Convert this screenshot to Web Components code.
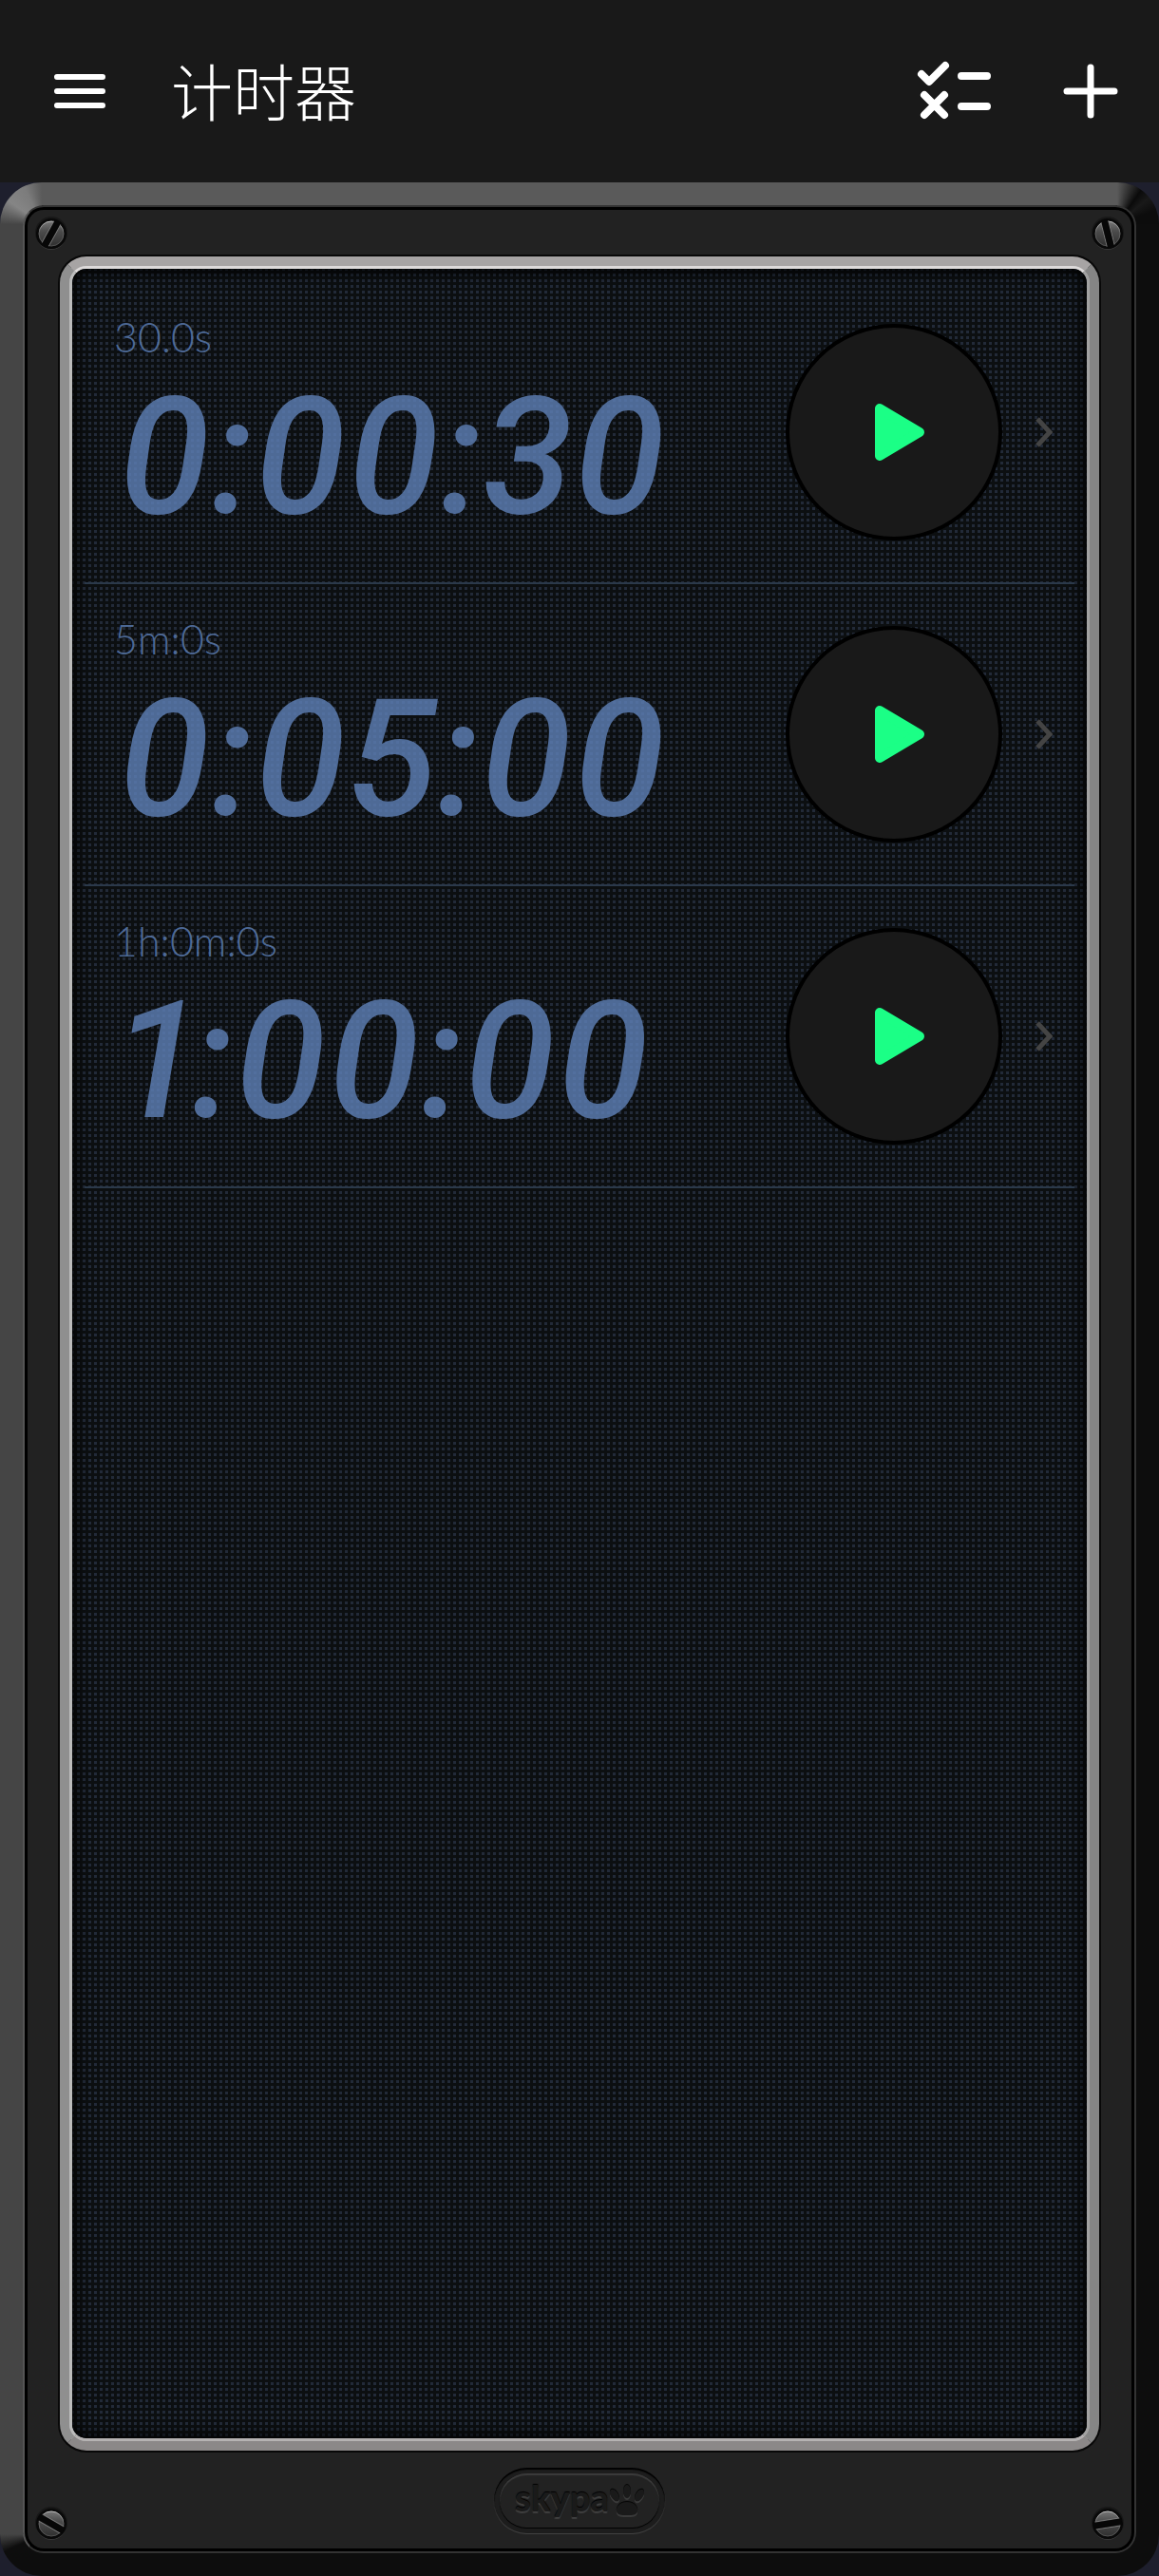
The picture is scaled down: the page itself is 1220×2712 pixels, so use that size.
<!DOCTYPE html>
<html lang="zh-CN">
<head>
<meta charset="utf-8">
<meta name="viewport" content="width=device-width, initial-scale=1">
<title>计时器</title>
<style>
  html, body {
    margin: 0;
    padding: 0;
  }

  body {
    display: flex;
    flex-direction: column;
    min-height: 100vh;
    background: #1e1f2d;
    font-family: Lato, "Noto Sans CJK SC", sans-serif;
  }
</style>
</head>
<body>
  <app-header>
    计时器
  </app-header>

  <device-frame>
    <timer-row name="30.0s" time="0:00:30"></timer-row>
    <timer-row name="5m:0s" time="0:05:00"></timer-row>
    <timer-row name="1h:0m:0s" time="1:00:00"></timer-row>
  </device-frame>

<script>
class AppHeader extends HTMLElement {
  constructor() {
    super();
    this.attachShadow({mode: 'open'});

    this.shadowRoot.innerHTML = `
      <style>
        :host {
          display: block;
          background: #191919;
        }

        header {
          display: flex;
          align-items: center;
          height: 192px;
          padding: 0 36px 0 48px;
        }

        h1 {
          flex: 1;
          margin: 0 0 4px 60px;
          color: #fff;
          font-family: "Noto Sans CJK SC", sans-serif;
          font-size: 65px;
          font-weight: 300;
          line-height: 80px;
        }

        button {
          display: flex;
          padding: 0;
          border: 0;
          background: none;
          color: #fff;
          cursor: pointer;
        }

        .edit {
          margin-right: 66px;
        }

        svg {
          display: block;
          fill: none;
          stroke: currentColor;
          stroke-linecap: round;
          stroke-linejoin: round;
        }
      </style>

      <header>
        <button aria-label="菜单">
          <svg width="72" height="60" viewBox="0 0 72 60" stroke-width="6">
            <path d="M12 15H60M12 30H60M12 45H60" />
          </svg>
        </button>
        <h1><slot></slot></h1>
        <button class="edit" aria-label="编辑">
          <svg width="84" height="66" viewBox="0 0 84 66" stroke-width="8">
            <path d="M8 15L16 23L33 6M11 37L32 58M32 37L11 58M50 17H77M50 49H77" />
          </svg>
        </button>
        <button aria-label="添加">
          <svg width="72" height="72" viewBox="0 0 72 72" stroke-width="7">
            <path d="M36 11V61M11 36H61" />
          </svg>
        </button>
      </header>
    `;
  }
}

class FrameScrew extends HTMLElement {
  constructor() {
    super();
    this.attachShadow({mode: 'open'});
    const angle = this.getAttribute('angle') || 0;

    this.shadowRoot.innerHTML = `
      <style>
        :host {
          display: block;
          width: 36px;
          height: 36px;
        }

        svg {
          display: block;
        }
      </style>

      <svg width="36" height="36" viewBox="0 0 36 36">
        <defs>
          <linearGradient id="metal" x1="0" y1="0" x2="0" y2="1">
            <stop offset="0" stop-color="#777" />
            <stop offset="0.4" stop-color="#4c4c4c" />
            <stop offset="1" stop-color="#303030" />
          </linearGradient>
          <linearGradient id="edge" x1="0" y1="0" x2="0" y2="1">
            <stop offset="0" stop-color="#c4c4c4" />
            <stop offset="0.45" stop-color="#666" />
            <stop offset="1" stop-color="#505050" />
          </linearGradient>
        </defs>
        <circle cx="18" cy="19" r="16" fill="#383838" />
        <circle cx="18" cy="17" r="17" fill="#181818" />
        <circle cx="18" cy="18" r="16" fill="#090909" />
        <circle cx="18" cy="18" r="13" fill="url(#metal)" stroke="url(#edge)" />
        <g transform="rotate(${angle} 18 18)">
          <path d="M14 5V31M22 5V31" stroke="#777" />
          <path d="M18 3V33" stroke="#070707" stroke-width="7" />
        </g>
      </svg>
    `;
  }
}

class BrandBadge extends HTMLElement {
  constructor() {
    super();
    this.attachShadow({mode: 'open'});

    this.shadowRoot.innerHTML = `
      <style>
        :host {
          display: block;
          padding: 6px;
          border-radius: 35px;
          background: #1d1d1d;
          box-shadow: inset 0 2px 1px #000, 0 1px 1px #444;
        }

        .plate {
          display: flex;
          align-items: center;
          box-sizing: border-box;
          width: 168px;
          height: 57px;
          padding-left: 16px;
          border-radius: 29px;
          background: #222;
          box-shadow: inset 0 2px 1px #3c3c3c, 0 1px 1px #000;
        }

        .name {
          color: #1a1a1a;
          font-family: Lato, sans-serif;
          font-size: 38px;
          font-weight: 900;
          line-height: 48px;
          margin-bottom: 8px;
          text-shadow: 0 -1px 1px #000, 0 2px 1px #404040;
        }

        svg {
          display: block;
          filter: drop-shadow(0 -1px 0 #060606) drop-shadow(0 2px 0 #3a3a3a);
        }
      </style>

      <div class="plate">
        <span class="name">skypa</span>
        <svg width="38" height="38" viewBox="0 0 38 38" fill="#1a1a1a">
          <ellipse cx="6" cy="13" rx="4" ry="7" transform="rotate(-32 6 13)" />
          <ellipse cx="19" cy="9" rx="4" ry="7" />
          <ellipse cx="32" cy="13" rx="4" ry="7" transform="rotate(32 32 13)" />
          <path d="M19 20C27 20 31 26 30 30C29 34 25 34 19 34S9 34 8 30C7 26 11 20 19 20Z" />
        </svg>
      </div>
    `;
  }
}

class DeviceFrame extends HTMLElement {
  constructor() {
    super();
    this.attachShadow({mode: 'open'});

    this.shadowRoot.innerHTML = `
      <style>
        :host {
          display: flex;
          flex: 1;
        }

        /* outer bevel: four lit corners over four flat edges */
        .bevel {
          display: flex;
          flex: 1;
          padding: 24px;
          border-radius: 44px;
          background:
            conic-gradient(from 270deg at 100% 100%, #454545, #858585 35deg, #7c7c7c 65deg, #5a5a5a 90deg) 0 0 / 44px 44px no-repeat,
            conic-gradient(from 0deg at 0 100%, #5a5a5a, #0a0a0a 35deg, #191919 50deg, #0c0c0c 70deg) 100% 0 / 44px 44px no-repeat,
            conic-gradient(from 180deg at 100% 0, #0d0d0d, #0d0d0d 65deg, #454545 90deg) 0 100% / 44px 44px no-repeat,
            linear-gradient(#454545, #454545) 0 50% / 24px calc(100% - 88px) no-repeat,
            linear-gradient(#5a5a5a, #5a5a5a) 50% 0 / calc(100% - 88px) 24px no-repeat,
            #0d0d0d;
        }

        .rim {
          display: flex;
          flex: 1;
          border: 2px solid #333;
          border-left-color: #555;
          border-radius: 22px;
          background: #000;
        }

        .panel {
          position: relative;
          display: flex;
          flex: 1;
          flex-direction: column;
          margin: 3px;
          padding: 47px 32px 16px;
          border-radius: 17px;
          background: #222;
        }

        .bezel {
          display: flex;
          flex: 1;
          border: 10px solid;
          border-color: #a7a4a4 #858585 #8b8888 #8f8f8f;
          border-radius: 28px;
          background: #aaa;
          margin: 2px;
          box-shadow: 0 0 0 2px #080808;
        }

        .lip {
          display: flex;
          flex: 1;
          border: 3px solid;
          border-color: #dddada #a2a2a2 #b5b2b2 #bcbcbc;
          border-radius: 18px;
          background: #0c0e10;
        }

        .screen {
          flex: 1;
          padding: 14px 13px;
          border-radius: 15px;
          background:
            conic-gradient(#0000 25%, #0000 75%, #222a38 75%) 5px 5px / 6px 6px,
            #0c0f11;
          box-shadow: inset 0 0 14px 3px #000;
        }

        .foot {
          display: flex;
          justify-content: center;
          margin-top: 16px;
        }

        frame-screw {
          position: absolute;
        }

        .tl { top: 7px; left: 7px; }
        .tr { top: 7px; right: 7px; }
        .bl { bottom: 8px; left: 7px; }
        .br { bottom: 8px; right: 7px; }
      </style>

      <div class="bevel">
        <div class="rim">
          <div class="panel">
            <main class="bezel">
              <div class="lip">
                <div class="screen"><slot></slot></div>
              </div>
            </main>
            <footer class="foot"><brand-badge></brand-badge></footer>
            <frame-screw class="tl" angle="29"></frame-screw>
            <frame-screw class="tr" angle="-14"></frame-screw>
            <frame-screw class="bl" angle="-60"></frame-screw>
            <frame-screw class="br" angle="81"></frame-screw>
          </div>
        </div>
      </div>
    `;
  }
}

class TimerRow extends HTMLElement {
  constructor() {
    super();
    this.attachShadow({mode: 'open'});

    this.shadowRoot.innerHTML = `
      <style>
        :host {
          display: block;
          border-bottom: 2px solid #2b394a;
        }

        .row {
          display: flex;
          align-items: center;
          height: 316px;
          padding: 0 22px 0 31px;
          color: rgba(95, 129, 184, 0.8);
        }

        .info {
          flex: 1;
          margin-bottom: 20px;
        }

        h2 {
          margin: 0 0 20px;
          font-size: 43px;
          font-weight: 300;
          line-height: 52px;
        }

        time {
          display: block;
          padding-left: 4px;
          font-family: Roboto, sans-serif;
          font-size: 172px;
          font-style: italic;
          font-weight: 500;
          font-variant-numeric: proportional-nums;
          line-height: 160px;
        }

        button {
          display: flex;
          align-items: center;
          justify-content: center;
          width: 228px;
          height: 228px;
          padding: 0;
          border: 4px solid #000;
          border-radius: 50%;
          background: #191919;
          cursor: pointer;
        }

        a {
          display: block;
          margin-left: 35px;
          color: #444;
        }

        svg {
          display: block;
        }
      </style>

      <div class="row">
        <div class="info">
          <h2>${this.getAttribute('name')}</h2>
          <time>${this.getAttribute('time')}</time>
        </div>
        <button aria-label="开始">
          <svg width="72" height="64" viewBox="0 0 72 64">
            <path d="M21 7L63 32L21 57Z" fill="#1bff86" stroke="#1bff86" stroke-width="10" stroke-linejoin="round" />
          </svg>
        </button>
        <a href="#" aria-label="详情">
          <svg width="19" height="32" viewBox="0 0 19 32" fill="none" stroke="currentColor" stroke-width="5">
            <path d="M2 2L15 16L2 30" />
          </svg>
        </a>
      </div>
    `;
  }
}

customElements.define('app-header', AppHeader);
customElements.define('frame-screw', FrameScrew);
customElements.define('brand-badge', BrandBadge);
customElements.define('device-frame', DeviceFrame);
customElements.define('timer-row', TimerRow);
</script>
</body>
</html>
